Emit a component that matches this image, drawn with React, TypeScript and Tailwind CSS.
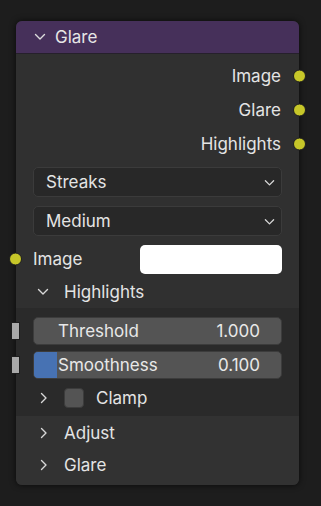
import React from 'react';

const font = { fontFamily: 'Inter, "Noto Sans", sans-serif' };

const ChevronDown = ({ className = '' }: { className?: string }) => (
  <svg viewBox="0 0 12 8" className={className} fill="none" stroke="currentColor" strokeWidth={1.4} strokeLinecap="round" strokeLinejoin="round">
    <path d="M1.5 1.5 L6 6 L10.5 1.5" />
  </svg>
);

const ChevronRight = ({ className = '' }: { className?: string }) => (
  <svg viewBox="0 0 8 12" className={className} fill="none" stroke="currentColor" strokeWidth={1.4} strokeLinecap="round" strokeLinejoin="round">
    <path d="M1.5 1.5 L6 6 L1.5 10.5" />
  </svg>
);

const Socket = ({ side }: { side: 'left' | 'right' }) => (
  <span
    className={`absolute top-1/2 -translate-y-1/2 w-[13px] h-[13px] rounded-full bg-[#c7c729] border border-[#1e1e1e] ${
      side === 'left' ? 'left-[-7px]' : 'right-[-7px]'
    }`}
  />
);

const ValueSocket = () => (
  <span className="absolute left-[-5px] top-1/2 -translate-y-1/2 w-[9px] h-[18px] bg-[#a9a9a9] border border-[#1e1e1e]" />
);

const OutputRow = ({ label }: { label: string }) => (
  <div className="relative h-[34px] flex items-center justify-end pr-[18px] pt-[2px] text-[17px] text-[#e4e4e4]">
    {label}
    <Socket side="right" />
  </div>
);

const Dropdown = ({ label }: { label: string }) => (
  <div className="mx-[17px] h-[30px] rounded-[5px] bg-[#282828] border border-[#3b3b3b] flex items-center justify-between pl-[12px] pr-[6px] text-[17px] text-[#e4e4e4]">
    <span className="pt-[2px]">{label}</span>
    <ChevronDown className="w-[11px] h-[8px] text-[#d8d8d8] mt-[2px]" />
  </div>
);

const Slider = ({ label, value, fill }: { label: string; value: string; fill: number }) => (
  <div className="relative h-[34px] flex items-center">
    <ValueSocket />
    <div className="relative mx-[17px] flex-1 h-[28px] rounded-[5px] bg-[#545454] border border-[#3c3c3c] overflow-hidden flex items-center justify-between pl-[24px] pr-[21px] text-[17px] text-[#e8e8e8]">
      {fill > 0 && <span className="absolute left-0 top-0 bottom-0 bg-[#4772b3]" style={{ width: fill }} />}
      <span className="relative pt-[2px]">{label}</span>
      <span className="relative pt-[2px]">{value}</span>
    </div>
  </div>
);

const PanelHeader = ({ label }: { label: string }) => (
  <div className="h-[32px] flex items-center pl-[24px] text-[17px] text-[#e4e4e4]">
    <ChevronRight className="w-[8px] h-[12px] text-[#d8d8d8]" />
    <span className="ml-[16px] pt-[2px]">{label}</span>
  </div>
);

export default function App() {
  return (
    <div className="w-[321px] h-[506px] bg-[#1d1d1d] pt-[21px] pl-[16px]" style={font}>
      <div className="relative w-[283px] h-[464px] rounded-[6px] bg-[#303030] shadow-[0_0_6px_rgba(0,0,0,0.7)] flex flex-col">
        {/* header */}
        <div className="h-[33px] shrink-0 rounded-t-[6px] bg-[#46305a] border-b border-[#26202c] flex items-center pl-[18px] text-[17px] text-[#e6e6e6]">
          <ChevronDown className="w-[12px] h-[8px] text-[#dcdcdc]" />
          <span className="ml-[9px] pt-[2px]">Glare</span>
        </div>

        {/* outputs */}
        <div className="pt-[5px]">
          <OutputRow label="Image" />
          <OutputRow label="Glare" />
          <OutputRow label="Highlights" />
        </div>

        {/* enums */}
        <div className="mt-[6px] flex flex-col gap-[9px]">
          <Dropdown label="Streaks" />
          <Dropdown label="Medium" />
        </div>

        {/* image input */}
        <div className="relative mt-[8px] h-[30px] flex items-center">
          <Socket side="left" />
          <span className="pl-[17px] pt-[2px] text-[17px] text-[#e4e4e4] flex-1">Image</span>
          <div className="w-[142px] h-[29px] mr-[17px] rounded-[5px] bg-white" />
        </div>

        {/* highlights panel */}
        <div className="mt-[2px] h-[32px] flex items-center pl-[21px] text-[17px] text-[#e4e4e4]">
          <ChevronDown className="w-[12px] h-[8px] text-[#d8d8d8]" />
          <span className="ml-[15px] pt-[2px]">Highlights</span>
        </div>
        <div className="bg-[#2a2a2a] pt-[6px] pb-[2px]">
          <Slider label="Threshold" value="1.000" fill={0} />
          <Slider label="Smoothness" value="0.100" fill={23} />
          <div className="h-[32px] flex items-center pl-[24px] text-[17px] text-[#e4e4e4]">
            <ChevronRight className="w-[8px] h-[12px] text-[#d8d8d8]" />
            <span className="ml-[16px] w-[20px] h-[20px] rounded-[4px] bg-[#545454] border border-[#3c3c3c]" />
            <span className="ml-[12px] pt-[2px]">Clamp</span>
          </div>
        </div>

        <div className="flex-1 bg-[#323232] rounded-b-[6px] pt-[1px]">
          <PanelHeader label="Adjust" />
          <PanelHeader label="Glare" />
        </div>
      </div>
    </div>
  );
}
